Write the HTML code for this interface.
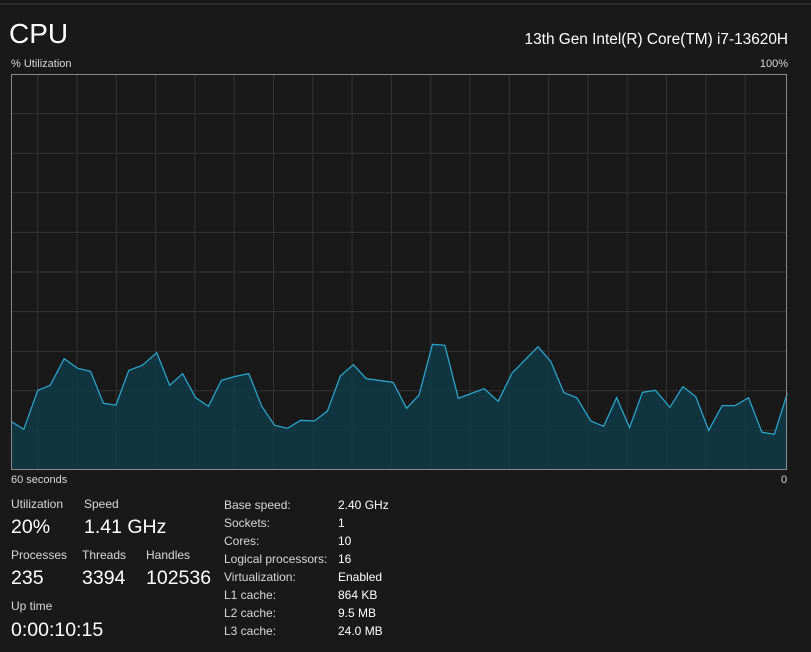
<!DOCTYPE html>
<html><head><meta charset="utf-8"><style>
body{margin:0;width:811px;height:652px;background:#191919;color:#fff;font-family:"Liberation Sans",sans-serif;overflow:hidden;position:relative}
.a{position:absolute;white-space:nowrap}
.l{font-size:12px;color:#d8d8d8}
.v{font-size:19.5px;color:#fff}
.s{font-size:11.5px;color:#d8d8d8}
</style></head><body>
<div class="a" style="left:0;top:3px;width:811px;height:2px;background:#2b2b2b"></div>
<div class="a" style="left:9px;top:18px;font-size:28px;">CPU</div>
<div class="a" style="right:23px;top:31px;font-size:15.4px;">13th Gen Intel(R) Core(TM) i7-13620H</div>
<div class="a s" style="left:11px;top:58px;font-size:11px">% Utilization</div>
<div class="a s" style="right:23px;top:58px;font-size:11px">100%</div>
<svg class="a" style="left:0;top:0" width="811" height="652">
<g stroke="#333" stroke-width="1">
<line x1="37.7" y1="74" x2="37.7" y2="470"/><line x1="77" y1="74" x2="77" y2="470"/><line x1="116.3" y1="74" x2="116.3" y2="470"/><line x1="155.6" y1="74" x2="155.6" y2="470"/><line x1="194.9" y1="74" x2="194.9" y2="470"/><line x1="234.2" y1="74" x2="234.2" y2="470"/><line x1="273.5" y1="74" x2="273.5" y2="470"/><line x1="312.8" y1="74" x2="312.8" y2="470"/><line x1="352.1" y1="74" x2="352.1" y2="470"/><line x1="391.4" y1="74" x2="391.4" y2="470"/><line x1="430.7" y1="74" x2="430.7" y2="470"/><line x1="470" y1="74" x2="470" y2="470"/><line x1="509.3" y1="74" x2="509.3" y2="470"/><line x1="548.6" y1="74" x2="548.6" y2="470"/><line x1="587.9" y1="74" x2="587.9" y2="470"/><line x1="627.2" y1="74" x2="627.2" y2="470"/><line x1="666.5" y1="74" x2="666.5" y2="470"/><line x1="705.8" y1="74" x2="705.8" y2="470"/><line x1="745.1" y1="74" x2="745.1" y2="470"/>
<line x1="11" y1="113.6" x2="787" y2="113.6"/><line x1="11" y1="153.2" x2="787" y2="153.2"/><line x1="11" y1="192.8" x2="787" y2="192.8"/><line x1="11" y1="232.4" x2="787" y2="232.4"/><line x1="11" y1="272" x2="787" y2="272"/><line x1="11" y1="311.6" x2="787" y2="311.6"/><line x1="11" y1="351.2" x2="787" y2="351.2"/><line x1="11" y1="390.8" x2="787" y2="390.8"/><line x1="11" y1="430.4" x2="787" y2="430.4"/>
</g>
<g transform="translate(0 330) scale(0.5173 0.3333)">
<polygon fill="#0f3a48" fill-opacity="0.85" points="22,420 22,275 46,298 73,181 97,166 124,86 150,115 175,124 200,220 224,226 249,121 275,106 303,68 328,166 353,131 378,203 403,229 428,151 455,139 481,131 506,229 531,286 556,295 581,271 608,273 633,243 658,138 683,104 708,146 760,157 786,235 810,195 836,43 860,46 886,205 936,176 963,214 990,129 1040,50 1065,95 1090,188 1115,203 1142,273 1167,289 1192,203 1217,293 1242,187 1267,181 1295,232 1320,170 1345,200 1370,301 1396,227 1421,227 1447,203 1473,307 1497,313 1522,190 1522,420"/>
<polyline fill="none" stroke="#2aa3c8" stroke-width="1.3" vector-effect="non-scaling-stroke" points="22,275 46,298 73,181 97,166 124,86 150,115 175,124 200,220 224,226 249,121 275,106 303,68 328,166 353,131 378,203 403,229 428,151 455,139 481,131 506,229 531,286 556,295 581,271 608,273 633,243 658,138 683,104 708,146 760,157 786,235 810,195 836,43 860,46 886,205 936,176 963,214 990,129 1040,50 1065,95 1090,188 1115,203 1142,273 1167,289 1192,203 1217,293 1242,187 1267,181 1295,232 1320,170 1345,200 1370,301 1396,227 1421,227 1447,203 1473,307 1497,313 1522,190"/>
</g>
<rect x="11.5" y="74.5" width="775" height="395" fill="none" stroke="#8a8a8a" stroke-width="1"/>
</svg>
<div class="a s" style="left:11px;top:474px;font-size:11px">60 seconds</div>
<div class="a s" style="left:781px;top:474px;font-size:11px">0</div>
<div class="a l" style="left:11px;top:497px">Utilization</div>
<div class="a l" style="left:84px;top:497px">Speed</div>
<div class="a v" style="left:11px;top:516px">20%</div>
<div class="a v" style="left:84px;top:516px">1.41 GHz</div>
<div class="a l" style="left:11px;top:548px">Processes</div>
<div class="a l" style="left:82px;top:548px">Threads</div>
<div class="a l" style="left:146px;top:548px">Handles</div>
<div class="a v" style="left:11px;top:567px">235</div>
<div class="a v" style="left:82px;top:567px">3394</div>
<div class="a v" style="left:146px;top:567px">102536</div>
<div class="a l" style="left:11px;top:599px">Up time</div>
<div class="a v" style="left:11px;top:619px">0:00:10:15</div>
<div class="a l" style="left:224px;top:496px;line-height:18px">Base speed:<br>Sockets:<br>Cores:<br>Logical processors:<br>Virtualization:<br>L1 cache:<br>L2 cache:<br>L3 cache:</div>
<div class="a l" style="left:338px;top:496px;line-height:18px;color:#fff">2.40 GHz<br>1<br>10<br>16<br>Enabled<br>864 KB<br>9.5 MB<br>24.0 MB</div>
</body></html>
